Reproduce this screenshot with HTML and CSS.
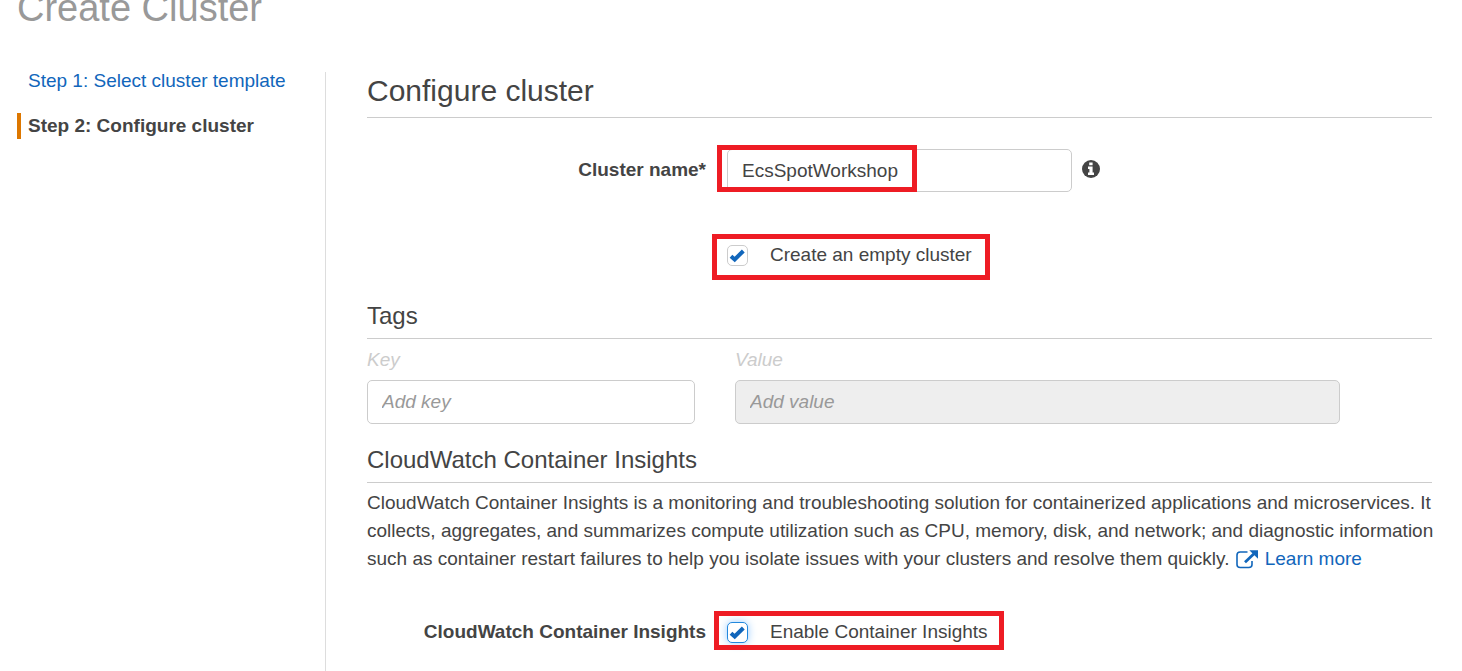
FILE: index.html
```html
<!DOCTYPE html>
<html lang="en">
<head>
<meta charset="utf-8">
<meta name="viewport" content="width=device-width, initial-scale=1">
<title>Create Cluster</title>
<link rel="stylesheet" href="styles.css">
</head>
<body>
<div class="page">
  <h1 class="page-title">Create Cluster</h1>
  <div class="columns">
    <nav class="steps" aria-label="Steps">
      <a class="step" href="#template">Step 1: Select cluster template</a>
      <span class="step step-current" aria-current="step">Step 2: Configure cluster</span>
    </nav>
    <main class="content">
      <h2 class="title">Configure cluster</h2>

      <div class="form-row name-row">
        <label class="row-label" for="cluster-name">Cluster name*</label>
        <div class="field">
          <input class="text-input name-input" id="cluster-name" type="text" value="EcsSpotWorkshop">
          <svg class="info-icon" viewBox="0 0 18 18" role="img" aria-label="Information">
            <circle cx="9" cy="9" r="9" fill="#444"/>
            <path d="M7.2 2.4h3.4v2.8H7.2zM6 6.6h4.6v6H12v2.4H6v-2.4h1.4V9H6z" fill="#fff"/>
          </svg>
          <span class="highlight highlight-name"></span>
        </div>
      </div>

      <div class="form-row empty-row">
        <span></span>
        <div class="field">
          <label class="check-label" for="empty-cluster">
            <span class="check">
              <input class="check-input" id="empty-cluster" type="checkbox" checked>
              <svg class="check-mark" viewBox="0 0 21 21" aria-hidden="true"><path d="M4 11.2L7.7 14.5 16.3 6" fill="none" stroke="#1166bb" stroke-width="4"/></svg>
            </span>
            Create an empty cluster
          </label>
          <span class="highlight highlight-empty"></span>
        </div>
      </div>

      <h3 class="subtitle tags-title">Tags</h3>
      <div class="tags">
        <div class="tag-key">
          <label class="tag-label" for="tag-key">Key</label>
          <input class="text-input tag-input" id="tag-key" type="text" placeholder="Add key">
        </div>
        <div class="tag-value">
          <label class="tag-label" for="tag-value">Value</label>
          <input class="text-input tag-input" id="tag-value" type="text" placeholder="Add value" disabled>
        </div>
      </div>

      <h3 class="subtitle insights-title">CloudWatch Container Insights</h3>
      <p class="description">CloudWatch Container Insights is a monitoring and troubleshooting solution for containerized applications and microservices. It collects, aggregates, and summarizes compute utilization such as CPU, memory, disk, and network; and diagnostic information such as container restart failures to help you isolate issues with your clusters and resolve them quickly. <a class="more" href="#learn-more"><svg class="external-icon" viewBox="0 0 22 19" aria-hidden="true"><path d="M11.5 2H4.2Q1 2 1 5v9.5q0 3 3.2 3h8.6q3.2 0 3.2-3V11" fill="none" stroke="#1166bb" stroke-width="1.6"/><path d="M9 12.3L18 3.7" fill="none" stroke="#1166bb" stroke-width="2.8"/><path d="M13.3.3H22v8.4z" fill="#1166bb"/></svg>Learn more</a></p>

      <div class="form-row insights-row">
        <span class="row-label" id="insights-label">CloudWatch Container Insights</span>
        <div class="field">
          <label class="check-label" for="insights">
            <span class="check">
              <input class="check-input check-focus" id="insights" type="checkbox" aria-describedby="insights-label" checked>
              <svg class="check-mark" viewBox="0 0 21 21" aria-hidden="true"><path d="M4 11.2L7.7 14.5 16.3 6" fill="none" stroke="#1166bb" stroke-width="4"/></svg>
            </span>
            Enable Container Insights
          </label>
          <span class="highlight highlight-insights"></span>
        </div>
      </div>
    </main>
  </div>
</div>
</body>
</html>
```
FILE: styles.css
```css
* {
  box-sizing: border-box;
}

body {
  margin: 0;
  overflow-x: hidden;
  background: #fff;
  color: #444;
  font: 19px/28px "Liberation Sans", Arial, sans-serif;
}

.page {
  display: flex;
  flex-direction: column;
  min-height: 100vh;
  padding: 0 30px 0 17px;
}

.page-title {
  margin: -14px 0 42px;
  color: #999;
  font-size: 38px;
  font-weight: 400;
  line-height: 44px;
}

.columns {
  display: flex;
  flex: 1;
}

.steps {
  display: flex;
  flex: 0 0 309px;
  flex-direction: column;
  gap: 19px;
  border-right: 1px solid #ddd;
}

.step {
  border-left: 4px solid transparent;
  padding-left: 7px;
  color: #1166bb;
  line-height: 26px;
  text-decoration: none;
}

.step:first-child {
  margin-top: -4px;
}

.step-current {
  border-left-color: #dd7700;
  color: #444;
  font-weight: 700;
}

.content {
  flex: 1;
  min-width: 0;
  padding: 0 0 26px 41px;
}

.title {
  margin: 0;
  border-bottom: 1px solid #ccc;
  padding-bottom: 7px;
  font-size: 30px;
  font-weight: 400;
  line-height: 38px;
}

.subtitle {
  margin: 0;
  border-bottom: 1px solid #ccc;
  padding-bottom: 7px;
  font-size: 24px;
  font-weight: 400;
  line-height: 30px;
}

.form-row {
  display: grid;
  grid-template-columns: 339px 1fr;
  column-gap: 21px;
  align-items: center;
}

.row-label {
  font-weight: 700;
  text-align: right;
  white-space: nowrap;
}

.field {
  position: relative;
  display: flex;
  align-items: center;
  gap: 10px;
}

.text-input {
  border: 1px solid #ccc;
  border-radius: 5px;
  padding: 0 14px;
  background: #fff;
  color: #444;
  font: inherit;
}

.text-input::placeholder {
  color: #999;
  font-style: italic;
  opacity: 1;
}

.text-input:disabled {
  background: #eee;
}

.name-row {
  margin-top: 31px;
}

.name-row .row-label {
  padding-bottom: 2px;
}

.name-input {
  width: 345px;
  height: 43px;
}

.info-icon {
  width: 18px;
  height: 18px;
  margin-bottom: 4px;
}

.empty-row {
  margin-top: 49px;
}

.check-label {
  display: flex;
  align-items: center;
  gap: 22px;
}

.check {
  display: grid;
  width: 21px;
  height: 21px;
}

.check-input {
  grid-area: 1 / 1;
  appearance: none;
  width: 21px;
  height: 21px;
  margin: 0;
  border: 1px solid #ccc;
  border-radius: 5px;
  background: #fff;
}

.check-focus {
  border-color: #2288dd;
  box-shadow: 0 0 8px #99ccff;
}

.check-mark {
  grid-area: 1 / 1;
  width: 21px;
  height: 21px;
  pointer-events: none;
  visibility: hidden;
}

.check-input:checked + .check-mark {
  visibility: visible;
}

.highlight {
  position: absolute;
  border: 5px solid #ee1c24;
  pointer-events: none;
}

.highlight-name {
  top: -4px;
  left: -10px;
  width: 200px;
  height: 47px;
}

.highlight-empty {
  top: -7px;
  left: -15px;
  width: 278px;
  height: 46px;
}

.highlight-insights {
  top: -7px;
  left: -13px;
  width: 290px;
  height: 39px;
}

.tags-title {
  margin-top: 32px;
}

.tags {
  display: flex;
  gap: 40px;
  margin-top: 7px;
}

.tag-key {
  flex: 0 0 328px;
}

.tag-value {
  flex: 1;
  margin-right: 92px;
}

.tag-label {
  display: block;
  margin-bottom: 6px;
  color: #ccc;
  font-style: italic;
}

.tag-input {
  display: block;
  width: 100%;
  height: 44px;
}

.insights-title {
  margin-top: 21px;
}

.description {
  margin: 6px -8px 0 0;
}

.more {
  color: #1166bb;
  text-decoration: none;
  white-space: nowrap;
}

.external-icon {
  width: 22px;
  height: 19px;
  margin: 0 7px 0 1px;
  vertical-align: -4px;
}

.insights-row {
  margin-top: 45px;
}
```
